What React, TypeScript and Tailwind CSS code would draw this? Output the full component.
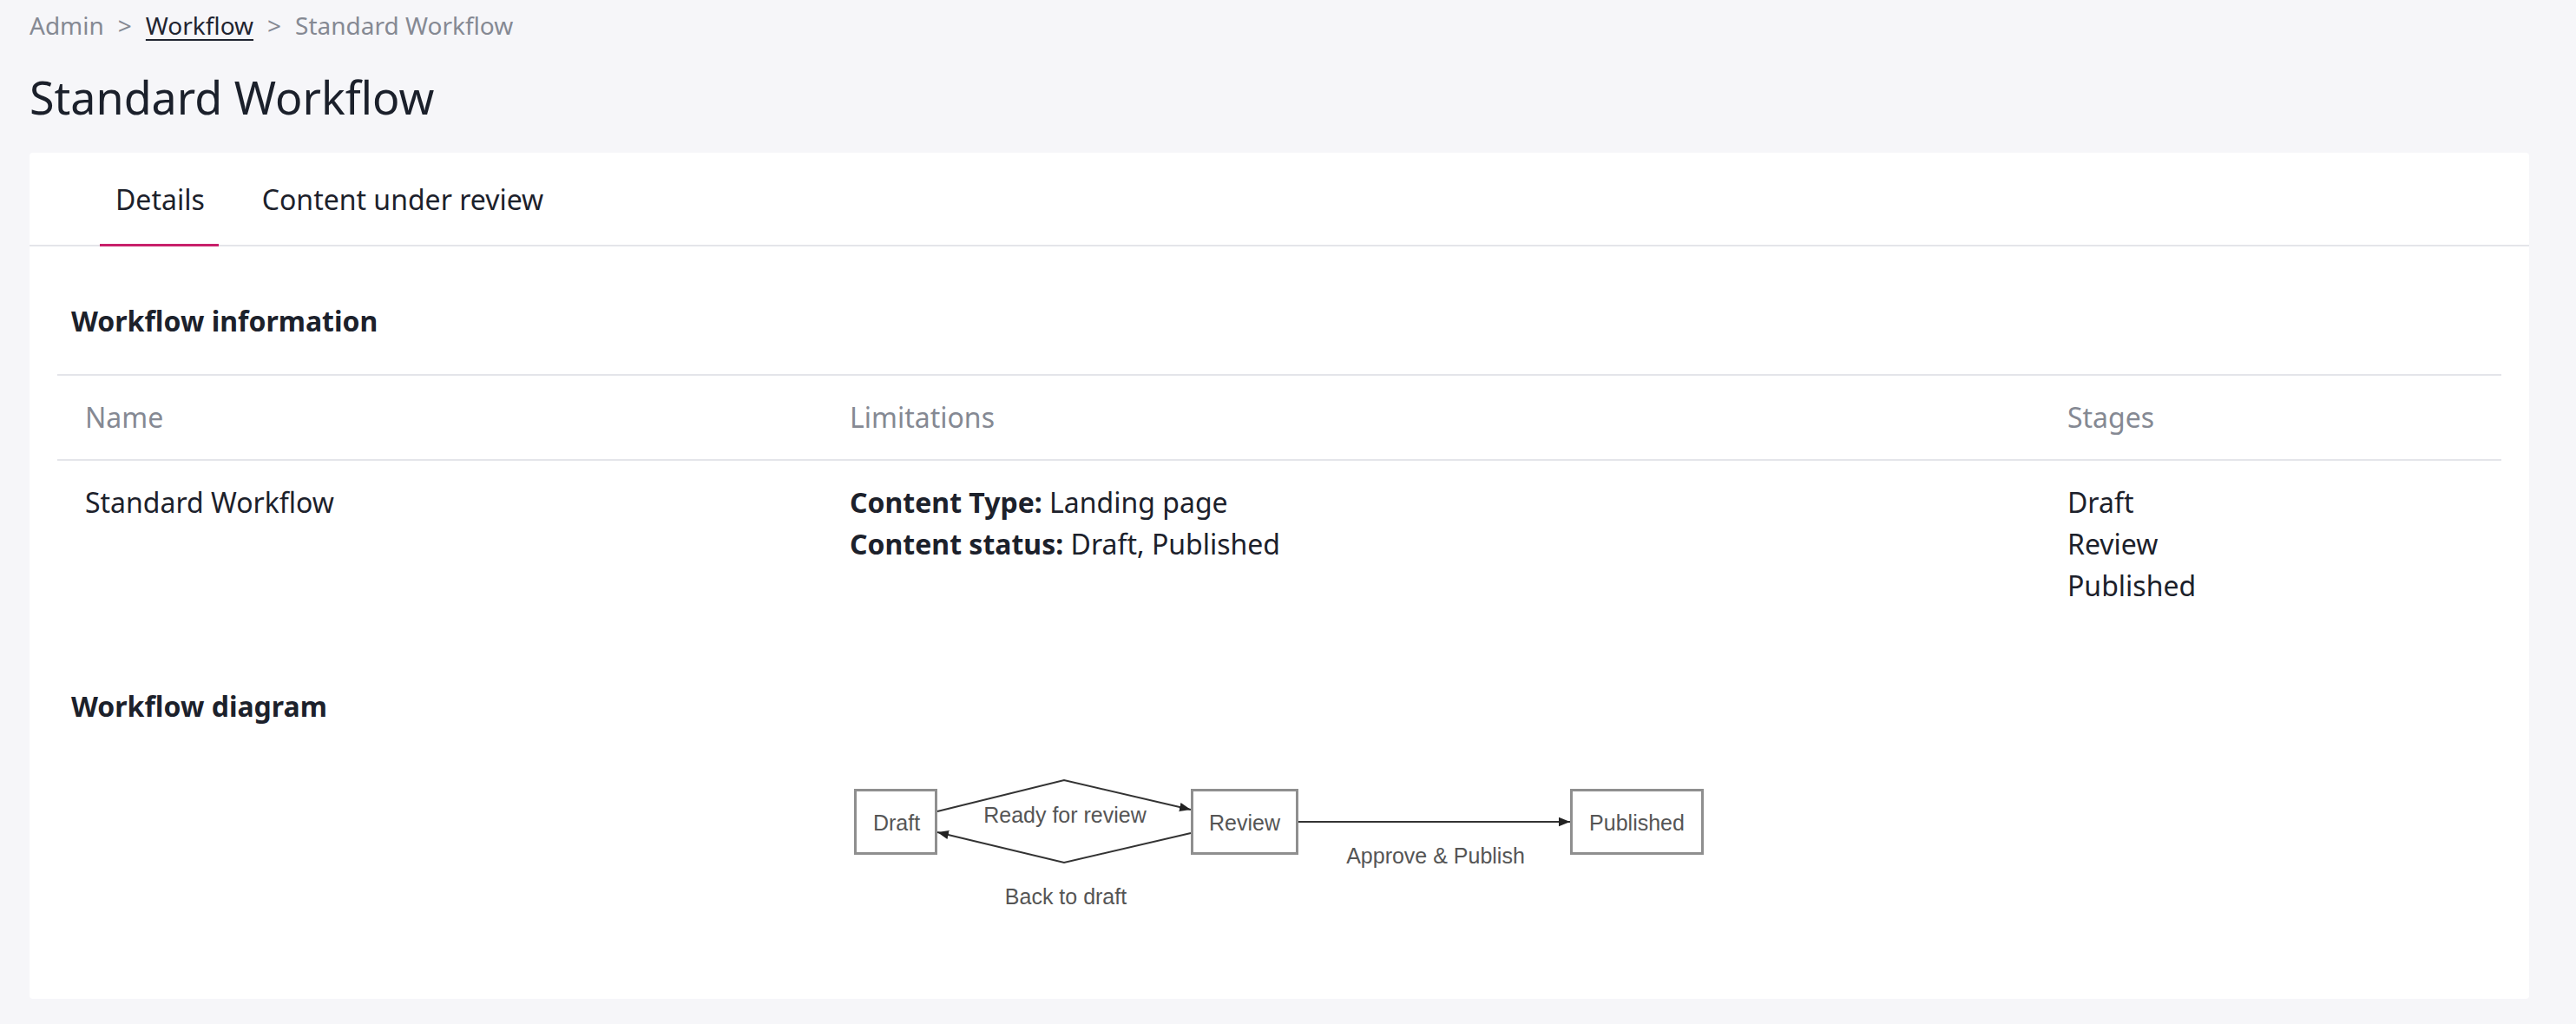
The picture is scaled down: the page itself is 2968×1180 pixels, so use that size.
import React from "react";

const font = { fontFamily: '"Noto Sans", "Open Sans", sans-serif' };

function Diagram() {
  const label = {
    fontFamily: '"Liberation Sans", Arial, sans-serif',
    fontSize: 25,
    fill: "#555555",
  } as const;
  return (
    <svg width={1000} height={170} viewBox="974 890 1000 170" className="block">
      <defs>
        <marker
          id="arr"
          viewBox="0 0 10 10"
          refX="10"
          refY="5"
          markerWidth="13"
          markerHeight="13"
          markerUnits="userSpaceOnUse"
          orient="auto"
        >
          <path d="M0,1 L10,5 L0,9 z" fill="#222" />
        </marker>
      </defs>
      <g fill="none" stroke="#8f8f8f" strokeWidth={3}>
        <rect x={985.5} y={910.5} width={93} height={73} />
        <rect x={1373.5} y={910.5} width={121} height={73} />
        <rect x={1810.5} y={910.5} width={151} height={73} />
      </g>
      <g fill="none" stroke="#333" strokeWidth={2}>
        <path d="M1080,935 L1226,899 L1372,933" markerEnd="url(#arr)" />
        <path d="M1372,960 L1226,994 L1080,959" markerEnd="url(#arr)" />
        <path d="M1496,947 L1809,947" markerEnd="url(#arr)" />
      </g>
      <g style={label} textAnchor="middle">
        <text x={1033} y={957}>Draft</text>
        <text x={1434} y={957}>Review</text>
        <text x={1886} y={957}>Published</text>
        <text x={1227} y={948}>Ready for review</text>
        <text x={1228} y={1042}>Back to draft</text>
        <text x={1654} y={995}>Approve &amp; Publish</text>
      </g>
    </svg>
  );
}

export default function App() {
  return (
    <div
      className="min-h-[1180px] w-full bg-[#f6f6f9] pl-[34px] pr-[54px] pt-[9px] text-[#1c212b]"
      style={font}
    >
      <nav className="flex items-baseline gap-[16px] text-[28px] leading-[40px] text-[#858993]">
        <span>Admin</span>
        <span>&gt;</span>
        <a className="text-[#1f2430] underline decoration-2 underline-offset-[5px]">Workflow</a>
        <span>&gt;</span>
        <span>Standard Workflow</span>
      </nav>
      <h1 className="mt-[32px] text-[52px] leading-[62px] font-normal text-[#1b202b]">
        Standard Workflow
      </h1>
      <div className="mt-[33px] rounded-[4px] bg-white pb-[91px]">
        <div className="flex border-b-2 border-[#e4e5ea] pl-[81px]">
          <div className="mb-[-2px] border-b-[3px] border-[#c8206a] pl-[18px] pr-[16px] pt-[32px] pb-[29px] text-[32px] leading-[44px] text-[#1c212b]">
            Details
          </div>
          <div className="mb-[-2px] ml-[32px] border-b-[3px] border-transparent pl-[18px] pr-[16px] pt-[32px] pb-[29px] text-[32px] leading-[44px] text-[#1c212b]">
            Content under review
          </div>
        </div>
        <div className="px-[32px] pt-[62px]">
          <h2 className="pl-[16px] text-[32px] font-bold leading-[48px] text-[#1c212b]">
            Workflow information
          </h2>
          <div className="mt-[37px] grid grid-cols-[881px_1403px_1fr] border-t-2 border-[#e4e5ea] text-[32px] leading-[48px]">
            <div className="border-b-2 border-[#e4e5ea] py-[24px] pl-[32px] text-[#858993]">Name</div>
            <div className="border-b-2 border-[#e4e5ea] py-[24px] pl-[32px] text-[#858993]">Limitations</div>
            <div className="border-b-2 border-[#e4e5ea] py-[24px] pl-[32px] text-[#858993]">Stages</div>
            <div className="py-[24px] pl-[32px]">Standard Workflow</div>
            <div className="py-[24px] pl-[32px]">
              <div>
                <span className="font-bold">Content Type:</span> Landing page
              </div>
              <div>
                <span className="font-bold">Content status:</span> Draft, Published
              </div>
            </div>
            <div className="py-[24px] pl-[32px]">
              <div>Draft</div>
              <div>Review</div>
              <div>Published</div>
            </div>
          </div>
          <h2 className="mt-[67px] pl-[16px] text-[32px] font-bold leading-[48px] text-[#1c212b]">
            Workflow diagram
          </h2>
        </div>
        <div className="mt-[52px] flex justify-center">
          <Diagram />
        </div>
      </div>
    </div>
  );
}
